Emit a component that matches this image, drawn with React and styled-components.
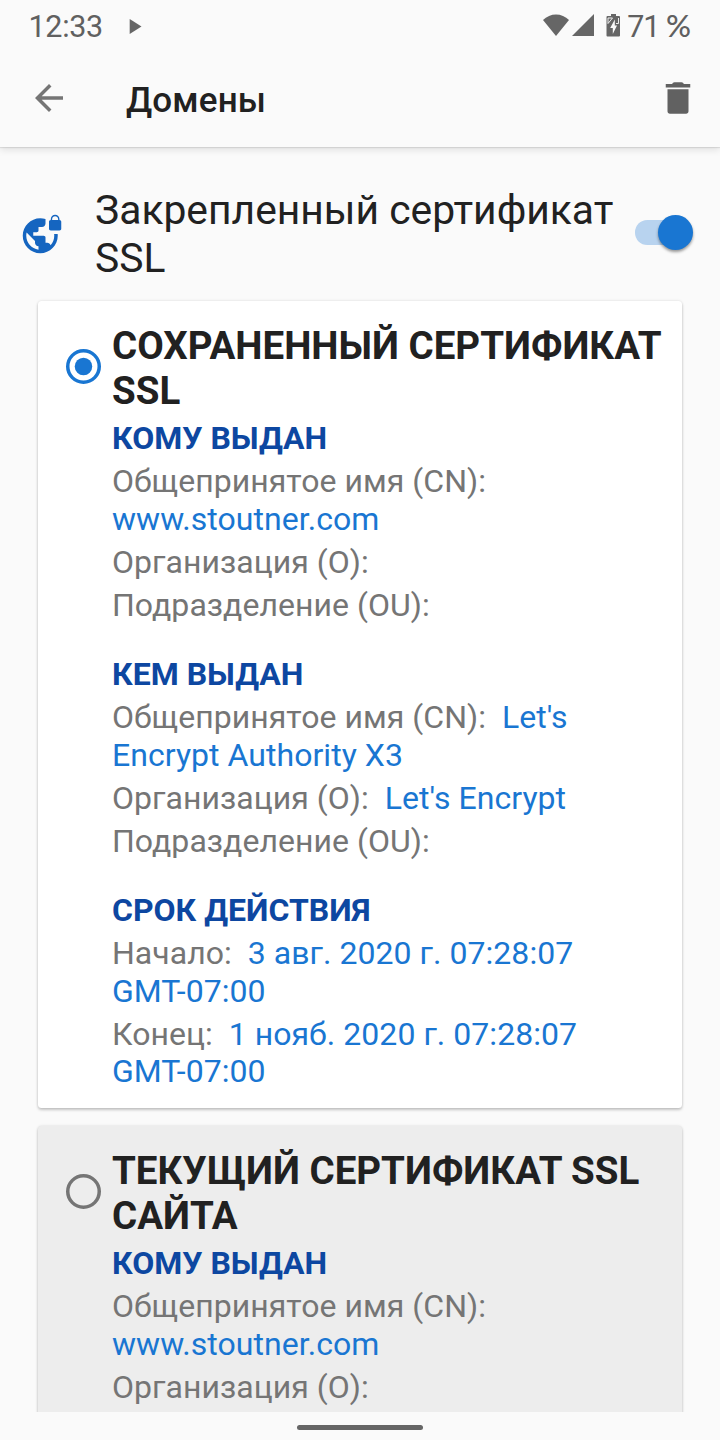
import React from 'react';
import styled, { createGlobalStyle } from 'styled-components';

const Global = createGlobalStyle`
  * { box-sizing: border-box; }
  body { margin: 0; background: #fafafa; font-family: Roboto, "Noto Sans", sans-serif; }
`;

const Screen = styled.div`
  width: 720px;
  height: 1440px;
  display: flex;
  flex-direction: column;
  overflow: hidden;
  background: #fafafa;
  color: #212121;
`;

const StatusBar = styled.header`
  height: 49px;
  flex: none;
  display: flex;
  align-items: center;
  padding: 4px 29px 0 28.5px;
  color: #606060;
  font-size: 30.5px;
  line-height: 45px;
`;

const Clock = styled.span`
  width: 99.5px;
  letter-spacing: -0.3px;
`;

const StatusIcons = styled.div`
  margin-left: auto;
  margin-right: 6px;
  display: flex;
  margin-top: -2px;
`;

const Percent = styled.span`
  display: flex;
  gap: 6.5px;
  letter-spacing: -1px;
`;

const PercentSign = styled.span`
  margin-top: -1px;
  font-family: Lato, sans-serif;
  font-weight: 500;
  font-size: 31px;
  letter-spacing: 0;
`;

const Toolbar = styled.nav`
  height: 98px;
  flex: none;
  display: flex;
  align-items: center;
  padding: 0 21px 0 28px;
  position: relative;
  background: #fafafa;
  box-shadow: 0 1px 1px rgba(0, 0, 0, 0.09), 0 3px 7px rgba(0, 0, 0, 0.1);
  clip-path: inset(0 0 -14px 0);
`;

const ToolbarTitle = styled.h1`
  flex: 1;
  margin: 6px 0 0 56px;
  font-size: 35px;
  line-height: 42px;
  font-weight: 500;
  letter-spacing: 0.15px;
`;

const Content = styled.main`
  flex: 1;
  min-height: 0;
  overflow: hidden;
  padding-top: 39px;
`;

const SettingRow = styled.section`
  display: flex;
  align-items: flex-start;
  height: 115px;
  padding: 0 27px 0 21px;
`;

const SettingLabel = styled.div`
  flex: 1;
  margin-left: 32px;
  font-size: 40.8px;
  line-height: 48px;
  white-space: nowrap;
`;

const SettingIcon = styled.div`
  width: 42px;
  height: 42px;
  margin-top: 27px;
`;

const Switch = styled.div`
  width: 58px;
  height: 35px;
  margin-top: 29px;
  display: flex;
  align-items: center;
  justify-content: flex-end;
`;

const Track = styled.div`
  width: 46px;
  height: 24.5px;
  margin-right: -23px;
  border-radius: 12.25px 0 0 12.25px;
  background: #b8d3ef;
`;

const Thumb = styled.div`
  flex: none;
  width: 35px;
  height: 35px;
  border-radius: 50%;
  background: #1976d2;
  box-shadow: 0 2px 3px rgba(0, 0, 0, 0.4);
`;

const Card = styled.article`
  width: 644px;
  height: 807px;
  margin: 0 0 18px 38px;
  padding: 22px 0 0 28.4px;
  display: flex;
  align-items: flex-start;
  border-radius: 3.5px;
  background: ${(p) => (p.$selected ? '#fff' : '#ededed')};
  box-shadow: 0 2px 3px rgba(0, 0, 0, 0.2), 0 0 3px rgba(0, 0, 0, 0.12);
`;

const RadioMark = styled.svg`
  flex: none;
  width: 35px;
  height: 35px;
  margin-top: 26px;
  color: ${(p) => (p.$on ? '#1976d2' : '#757575')};
`;

const Details = styled.div`
  margin-left: 10.6px;
  white-space: pre;
`;

const CardTitle = styled.h2`
  margin: 0;
  font-size: 38.5px;
  line-height: 45px;
  font-weight: 700;
`;

const GroupTitle = styled.h3`
  margin: ${(p) => (p.$first ? 0 : 25)}px 0 0;
  padding: 6px 0;
  font-size: 32px;
  line-height: 38px;
  font-weight: 700;
  color: #0d47a1;
`;

const Field = styled.p`
  margin: 0 0 5.5px;
  font-size: 32px;
  line-height: 37.5px;
  letter-spacing: 0.04px;
  color: #757575;
`;

const Value = styled.span`
  color: #1976d2;
`;

const NavBar = styled.footer`
  height: 28px;
  flex: none;
  display: flex;
  justify-content: center;
  padding-top: 13px;
  position: relative;
  background: #fafafa;
`;

const NavHandle = styled.div`
  width: 126px;
  height: 5px;
  border-radius: 3px;
  background: #666;
`;

const BACK = 'M20 11H7.83l5.59-5.59L12 4l-8 8 8 8 1.41-1.41L7.83 13H20v-2z';
const TRASH =
  'M6 19.6c0 .9.6 1.4 1.4 1.4h9.2c.8 0 1.4-.5 1.4-1.4V7H6v12.6zM19 4h-3.7c-.2-.6-.6-1-1.3-1h-4c-.7 0-1.1.4-1.3 1H5v2h14V4z';
const VPN_LOCK =
  'M22 4v-.5C22 2.12 20.88 1 19.5 1S17 2.12 17 3.5V4c-.55 0-1 .45-1 1v4c0 .55.45 1 1 1h5c.55 0 1-.45 1-1V5c0-.55-.45-1-1-1zm-.8 0h-3.4v-.5c0-.94.76-1.7 1.7-1.7s1.7.76 1.7 1.7V4zm-2.28 8c.04.33.08.66.08 1 0 2.08-.8 3.97-2.1 5.39-.26-.81-1-1.39-1.9-1.39h-1v-3c0-.55-.45-1-1-1H7v-2h2c.55 0 1-.45 1-1V8h2c1.1 0 2-.9 2-2V3.46c-.95-.3-1.95-.46-3-.46C5.48 3 1 7.48 1 13s4.48 10 10 10 10-4.48 10-10c0-.34-.02-.67-.05-1h-2.03zM10 20.93c-3.95-.49-7-3.85-7-7.93 0-.62.08-1.21.21-1.79L8 16v1c0 1.1.9 2 2 2v1.93z';

const Glyph = ({ path, color }) => (
  <svg width="42" height="42" viewBox="0 0 24 24" fill={color} display="block">
    <path d={path} />
  </svg>
);

const Radio = ({ on }) => (
  <RadioMark $on={on} viewBox="0 0 20 20">
    <circle cx="10" cy="10" r="9" fill="none" stroke="currentColor" strokeWidth="2" />
    {on && <circle cx="10" cy="10" r="5" fill="currentColor" />}
  </RadioMark>
);

const savedGroups = [
  {
    title: 'КОМУ ВЫДАН',
    fields: [
      { label: 'Общепринятое имя (CN):\n', value: 'www.stoutner.com' },
      { label: 'Организация (O):' },
      { label: 'Подразделение (OU):' },
    ],
  },
  {
    title: 'КЕМ ВЫДАН',
    fields: [
      { label: 'Общепринятое имя (CN):  ', value: "Let's\nEncrypt Authority X3" },
      { label: 'Организация (O):  ', value: "Let's Encrypt" },
      { label: 'Подразделение (OU):' },
    ],
  },
  {
    title: 'СРОК ДЕЙСТВИЯ',
    fields: [
      { label: 'Начало:  ', value: '3 авг. 2020 г. 07:28:07\nGMT-07:00' },
      { label: 'Конец:  ', value: '1 нояб. 2020 г. 07:28:07\nGMT-07:00' },
    ],
  },
];

const currentGroups = [
  {
    title: 'КОМУ ВЫДАН',
    fields: [
      { label: 'Общепринятое имя (CN):\n', value: 'www.stoutner.com' },
      { label: 'Организация (O):' },
    ],
  },
];

function Certificate({ title, groups, selected }) {
  return (
    <Card $selected={selected}>
      <Radio on={selected} />
      <Details>
        <CardTitle>{title}</CardTitle>
        {groups.map((g, i) => (
          <React.Fragment key={g.title}>
            <GroupTitle $first={i === 0}>{g.title}</GroupTitle>
            {g.fields.map((f) => (
              <Field key={f.label}>
                {f.label}
                {f.value && <Value>{f.value}</Value>}
              </Field>
            ))}
          </React.Fragment>
        ))}
      </Details>
    </Card>
  );
}

export default function App() {
  return (
    <Screen>
      <Global />
      <StatusBar>
        <Clock>12:33</Clock>
        <svg width="14" height="16" viewBox="0 0 14 16" fill="#666">
          <path d="M1.7 0v15L13.500 7.500z" />
        </svg>
        <StatusIcons>
          <svg width="78" height="24" viewBox="0 0 78 24" fill="#666">
            <path d="M0 6C7-1.500 19-1.500 26 6L13 22z" />
            <path d="M51 0v22H29z" />
            <path
              fillRule="evenodd"
              d="M68 0h5v2h3q1 0 1 1v18.500q0 1-1 1H64.500q-1 0-1-1V3q0-1 1-1H68zM71.800 5.500l-4.600 8.500h2.600v6l4.200-8.500h-2.200z"
            />
            <path d="M65 9.500V4h4.500zM75.500 4v5.500h-2.500" fill="none" stroke="#fafafa" strokeWidth="0.9" />
          </svg>
        </StatusIcons>
        <Percent>
          71<PercentSign>%</PercentSign>
        </Percent>
      </StatusBar>
      <Toolbar>
        <Glyph path={BACK} color="#757575" />
        <ToolbarTitle>Домены</ToolbarTitle>
        <Glyph path={TRASH} color="#616161" />
      </Toolbar>
      <Content>
        <SettingRow>
          <SettingIcon>
            <Glyph path={VPN_LOCK} color="#1565c0" />
          </SettingIcon>
          <SettingLabel>
            Закрепленный сертификат
            <br />
            SSL
          </SettingLabel>
          <Switch>
            <Track />
            <Thumb />
          </Switch>
        </SettingRow>
        <Certificate title={'СОХРАНЕННЫЙ СЕРТИФИКАТ\nSSL'} groups={savedGroups} selected />
        <Certificate title={'ТЕКУЩИЙ СЕРТИФИКАТ SSL\nСАЙТА'} groups={currentGroups} />
      </Content>
      <NavBar>
        <NavHandle />
      </NavBar>
    </Screen>
  );
}
